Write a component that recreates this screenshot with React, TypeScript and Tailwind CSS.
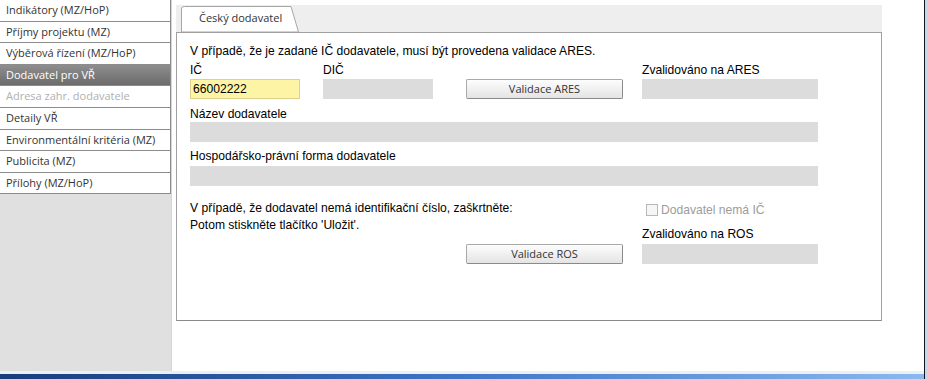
import React from "react";

const sideItems: { label: string; state?: "active" | "disabled" }[] = [
  { label: "Indikátory (MZ/HoP)" },
  { label: "Příjmy projektu (MZ)" },
  { label: "Výběrová řízení (MZ/HoP)" },
  { label: "Dodavatel pro VŘ", state: "active" },
  { label: "Adresa zahr. dodavatele", state: "disabled" },
  { label: "Detaily VŘ" },
  { label: "Environmentální kritéria (MZ)" },
  { label: "Publicita (MZ)" },
  { label: "Přílohy (MZ/HoP)" },
];

const ui = { fontFamily: '"Open Sans", "Noto Sans", sans-serif' };
const arial = { fontFamily: '"Liberation Sans", Arial, sans-serif' };

function Btn({ children }: { children: React.ReactNode }) {
  return (
    <div
      className="flex h-[20px] w-[157px] items-center justify-center rounded-[2px] border border-[#a9a9a9] border-b-[#8a8a8a] border-r-[#8a8a8a] bg-gradient-to-b from-[#fdfdfd] to-[#e4e4e4] text-[11px] text-[#333]"
      style={ui}
    >
      {children}
    </div>
  );
}

function Field({ w }: { w: string }) {
  return <div className={`h-[20px] bg-[#dcdcdc] ${w}`} />;
}

export default function App() {
  return (
    <div className="flex h-[379px] w-[928px] overflow-hidden bg-white">
      <div className="flex min-w-0 flex-1 flex-col">
        <div className="flex min-h-0 flex-1">
          {/* sidebar */}
          <div className="w-[171px] shrink-0 bg-[#e0e0e0]">
            {sideItems.map((it) => (
              <div
                key={it.label}
                className={
                  "box-border flex h-[21.6px] items-center border-b border-r border-[#8c8c8c] pl-[6px] text-[11px] " +
                  (it.state === "active"
                    ? "bg-gradient-to-b from-[#8e8e8e] to-[#6c6c6c] text-white"
                    : it.state === "disabled"
                    ? "bg-white text-[#b0b0b0]"
                    : "bg-white text-[#333]")
                }
                style={ui}
              >
                {it.label}
              </div>
            ))}
          </div>
          {/* main */}
          <div className="flex-1 border-l border-[#d6d6d6] bg-white pl-[4px] pt-[5px]">
            <div className="w-[706px]">
              <div className="flex h-[27px] items-end bg-[#eeeeee] pl-[5px]">
                <div className="relative h-[27px] w-[118px]">
                  <svg className="absolute inset-0" width="118" height="27" viewBox="0 0 118 27">
                    <path
                      d="M0.5 27 L0.5 4 Q0.5 1.5 3.5 1.5 L110 1.5 L117.5 27 Z"
                      fill="#ffffff"
                      stroke="#a6a6a6"
                      strokeWidth="1"
                    />
                  </svg>
                  <div
                    className="relative pl-[18px] pt-[5px] text-[11px] leading-[16px] text-[#333]"
                    style={ui}
                  >
                    Český dodavatel
                  </div>
                </div>
              </div>
              <div
                className="h-[289px] border border-[#a0a0a0] border-b-[#8a8a8a] pl-[13px] pt-[11px] text-[12.1px] leading-[14px] text-black"
                style={arial}
              >
                <div>V případě, že je zadané IČ dodavatele, musí být provedena validace ARES.</div>
                <div className="mt-[5px] flex">
                  <div className="w-[133px]">IČ</div>
                  <div className="w-[319px]">DIČ</div>
                  <div>Zvalidováno na ARES</div>
                </div>
                <div className="mt-[2px] flex">
                  <div className="box-border flex h-[20px] w-[110px] items-center border border-[#ddd28e] bg-[#fdf4a6] pl-[2px]">
                    66002222
                  </div>
                  <div className="ml-[23px]">
                    <Field w="w-[110px]" />
                  </div>
                  <div className="ml-[33px]">
                    <Btn>Validace ARES</Btn>
                  </div>
                  <div className="ml-[19px]">
                    <Field w="w-[176px]" />
                  </div>
                </div>
                <div className="mt-[8px]">Název dodavatele</div>
                <div className="mt-[1px]">
                  <Field w="w-[628px]" />
                </div>
                <div className="mt-[7px]">Hospodářsko-právní forma dodavatele</div>
                <div className="mt-[3px]">
                  <Field w="w-[628px]" />
                </div>
                <div className="mt-[14px] flex">
                  <div className="w-[452px]">
                    <div className="pt-[1px]">V případě, že dodavatel nemá identifikační číslo, zaškrtněte:</div>
                    <div className="mt-[3px]">Potom stiskněte tlačítko 'Uložit'.</div>
                    <div className="ml-[276px] mt-[12px]">
                      <Btn>Validace ROS</Btn>
                    </div>
                  </div>
                  <div className="w-[176px]">
                    <div className="mt-[3px] flex h-[13px] items-center pl-[4px] text-[#9c9c9c]">
                      <div className="box-border h-[12px] w-[12px] border border-[#b8b8b8] bg-[#f6f6f6]" />
                      <span className="ml-[3px]">Dodavatel nemá IČ</span>
                    </div>
                    <div className="mt-[11px]">Zvalidováno na ROS</div>
                    <div className="mt-[3px]">
                      <Field w="w-[176px]" />
                    </div>
                  </div>
                </div>
              </div>
            </div>
          </div>
        </div>
        <div className="h-[3px] bg-[#e8f0fa]" />
        <div className="h-[5px] bg-gradient-to-r from-[#1a3c7c] via-[#3f75c8] to-[#8cb8ee]" />
      </div>
      <div className="w-[1px] bg-[#151515]" />
      <div className="w-[3px] bg-[#c4d7ef]" />
    </div>
  );
}
